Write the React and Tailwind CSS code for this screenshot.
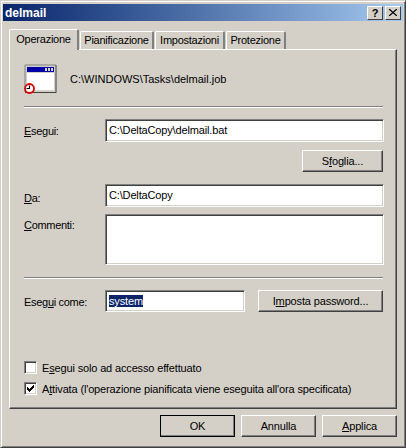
const font = "font-['Liberation_Sans',Arial,sans-serif]";

function Tab({ label, active, className }) {
  return (
    <div
      className={
        "box-border flex justify-center rounded-t-[2px] border-t border-l border-r-2 border-t-white border-l-white border-r-[#808080] bg-[#d4d0c8] " +
        (active ? "relative z-10 -mb-px h-[21px] pt-[2px] " : "h-[18px] pt-[1px] ") +
        className
      }
    >
      {label}
    </div>
  );
}

function Field({ className, children }) {
  return (
    <div
      className={
        "box-border border border-t-[#808080] border-l-[#808080] border-r-white border-b-white shadow-[inset_1px_1px_0_#404040,inset_-1px_-1px_0_#d4d0c8] bg-white pl-[3px] pt-[3px] leading-[14px] " +
        className
      }
    >
      {children}
    </div>
  );
}

function Button({ className, children }) {
  return (
    <div
      className={
        "box-border flex items-center justify-center border border-t-white border-l-white border-r-[#404040] border-b-[#404040] shadow-[inset_-1px_-1px_0_#808080] bg-[#d4d0c8] " +
        className
      }
    >
      <span>{children}</span>
    </div>
  );
}

function Separator() {
  return <div className="mr-[1px] h-[2px] border-t border-b border-t-[#808080] border-b-white" />;
}

function Checkbox({ checked }) {
  return (
    <div className="box-border h-[13px] w-[13px] shrink-0 border border-t-[#808080] border-l-[#808080] border-r-white border-b-white shadow-[inset_1px_1px_0_#404040,inset_-1px_-1px_0_#d4d0c8] bg-white">
      {checked && (
        <svg width="11" height="11" viewBox="0 0 11 11" className="block">
          <path d="M2 4v3h1v1h1v1h1V8h1V7h1V6h1V5h1V2H8v1H7v1H6v1H5v1H4V5H3V4z" fill="#000" />
        </svg>
      )}
    </div>
  );
}

function JobIcon() {
  return (
    <svg width="33" height="31" viewBox="0 0 33 31" className="block">
      <rect x="1" y="1" width="31" height="27" fill="#d4d0c8" />
      <path d="M1 1h31M1 1v27" stroke="#808080" fill="none" />
      <path d="M32 1v28M1 28.500h31" stroke="#404040" fill="none" />
      <rect x="3" y="3" width="27" height="5" fill="#0000a8" />
      <rect x="21" y="4" width="2" height="3" fill="#d4d0c8" />
      <rect x="24" y="4" width="2" height="3" fill="#d4d0c8" />
      <rect x="27" y="4" width="2" height="3" fill="#d4d0c8" />
      <rect x="3" y="9" width="27" height="17" fill="#fff" />
      <circle cx="5.500" cy="24.500" r="4.500" fill="#fff" stroke="#d80000" strokeWidth="1.800" />
      <path d="M5.500 21.500V24.500H2.500" stroke="#000" strokeWidth="1.200" fill="none" />
    </svg>
  );
}

export default function App() {
  return (
    <div className={"box-border flex h-[448px] w-[406px] flex-col border border-t-[#d4d0c8] border-l-[#d4d0c8] border-r-[#404040] border-b-[#404040] bg-[#d4d0c8] p-[2px] text-[11px] leading-[14px] tracking-[-0.15px] text-black shadow-[inset_1px_1px_0_#fff,inset_-1px_-1px_0_#808080] " + font}>
      {/* Title bar */}
      <div className="mt-[1px] flex h-[17px] shrink-0 items-center justify-between bg-gradient-to-r from-[#0a246a] to-[#a6caf0] pl-[2px] pr-[2px]">
        <span className="text-[12px] font-bold tracking-normal text-white">delmail</span>
        <div className="flex">
          <div className="box-border flex h-[14px] w-[16px] items-center justify-center border border-t-white border-l-white border-r-[#404040] border-b-[#404040] bg-[#d4d0c8] text-[11px] font-bold">?</div>
          <div className="ml-[2px] box-border flex h-[14px] w-[16px] items-center justify-center border border-t-white border-l-white border-r-[#404040] border-b-[#404040] bg-[#d4d0c8]">
            <svg width="8" height="7" viewBox="0 0 8 7">
              <path d="M0 0l8 7M8 0L0 7" stroke="#000" strokeWidth="1.300" />
            </svg>
          </div>
        </div>
      </div>

      <div className="ml-[6px] mr-[6px] mt-[8px] flex h-[20px] shrink-0 items-end tracking-[-0.25px]">
        <Tab active label="Operazione" className="w-[70px]" />
        <Tab label="Pianificazione" className="ml-[1px] w-[74px]" />
        <Tab label="Impostazioni" className="ml-[1px] w-[70px]" />
        <Tab label="Protezione" className="ml-[1px] w-[60px]" />
      </div>

      {/* Panel */}
      <div className="ml-[6px] box-border h-[360px] w-[388px] shrink-0 border border-t-white border-l-white border-r-[#404040] border-b-[#404040] pl-[14px] pr-[12px] shadow-[inset_-1px_-1px_0_#808080]">
        <div className="mt-[14px] flex h-[30px] items-center">
          <JobIcon />
          <span className="ml-[13px] tracking-normal">C:\WINDOWS\Tasks\delmail.job</span>
        </div>
        <div className="mt-[12px]"><Separator /></div>

        <div className="mt-[11px] flex items-center">
          <span className="w-[81px] tracking-[-0.3px]"><u>E</u>segui:</span>
          <Field className="h-[23px] w-[279px]">C:\DeltaCopy\delmail.bat</Field>
        </div>
        <div className="mt-[8px] flex justify-end">
          <Button className="mr-[1px] h-[22px] w-[81px]">S<u>f</u>oglia...</Button>
        </div>
        <div className="mt-[12px] flex items-start">
          <span className="mt-[7px] w-[81px] tracking-[-0.3px]"><u>D</u>a:</span>
          <Field className="h-[23px] w-[279px]">C:\DeltaCopy</Field>
        </div>
        <div className="mt-[7px] flex items-start">
          <span className="mt-[4px] w-[81px] tracking-[-0.3px]"><u>C</u>ommenti:</span>
          <Field className="h-[51px] w-[279px]" />
        </div>
        <div className="mt-[12px]"><Separator /></div>

        <div className="mt-[11px] flex items-start">
          <span className="mt-[5px] w-[81px] tracking-[-0.3px]">Eseg<u>u</u>i come:</span>
          <Field className="h-[22px] w-[140px]">
            <span className="bg-[#0a246a] text-white">system</span>
          </Field>
          <Button className="ml-[13px] h-[22px] w-[125px]">I<u>m</u>posta password...</Button>
        </div>

        <div className="mt-[49px] flex h-[13px] items-center">
          <Checkbox />
          <span className="ml-[5px]">E<u>s</u>egui solo ad accesso effettuato</span>
        </div>
        <div className="mt-[8px] flex h-[13px] items-center">
          <Checkbox checked />
          <span className="ml-[5px]">A<u>t</u>tivata (l'operazione pianificata viene eseguita all'ora specificata)</span>
        </div>
      </div>

      {/* Bottom buttons */}
      <div className="ml-[6px] mt-[6px] flex w-[388px] justify-end gap-[6px]">
        <Button className="h-[22px] w-[75px] outline outline-1 -outline-offset-1 outline-black">OK</Button>
        <Button className="h-[22px] w-[75px]">Annulla</Button>
        <Button className="h-[22px] w-[75px]"><u>A</u>pplica</Button>
      </div>
    </div>
  );
}
